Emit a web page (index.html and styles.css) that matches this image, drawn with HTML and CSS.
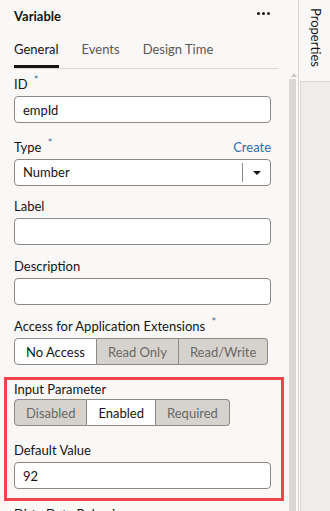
FILE: index.html
```html
<!DOCTYPE html>
<html lang="en">
<head>
    <meta charset="UTF-8">
    <meta name="viewport" content="width=device-width, initial-scale=1.0">
    <title>Variable - Properties</title>
    <link rel="stylesheet" href="styles.css">
</head>
<body>
    <div class="app">
        <!-- Properties panel -->
        <div class="panel">
            <div class="panel-head">
                <h1>Variable</h1>
                <span class="more"><i></i><i></i><i></i></span>
            </div>

            <div class="tabs">
                <span class="tab active">General</span>
                <span class="tab">Events</span>
                <span class="tab">Design Time</span>
            </div>

            <div class="form">
                <div class="field">
                    <label>ID <span class="req">*</span></label>
                    <input type="text" value="empId">
                </div>

                <div class="field type-field">
                    <div class="field-head">
                        <label>Type <span class="req">*</span></label>
                        <a href="#" class="link">Create</a>
                    </div>
                    <div class="select">
                        <span class="select-value">Number</span>
                        <span class="select-btn"><span class="caret"></span></span>
                    </div>
                </div>

                <div class="field">
                    <label>Label</label>
                    <input type="text">
                </div>

                <div class="field">
                    <label>Description</label>
                    <input type="text">
                </div>

                <div class="field">
                    <label>Access for Application Extensions <span class="req">*</span></label>
                    <div class="btn-group">
                        <button class="on">No Access</button>
                        <button>Read Only</button>
                        <button>Read/Write</button>
                    </div>
                </div>

                <!-- highlighted section -->
                <div class="highlight">
                    <div class="field first">
                        <label>Input Parameter</label>
                        <div class="btn-group">
                            <button>Disabled</button>
                            <button class="on">Enabled</button>
                            <button>Required</button>
                        </div>
                    </div>
                    <div class="field last">
                        <label>Default Value</label>
                        <input type="text" value="92">
                    </div>
                </div>

                <div class="field">
                    <label>Dirty Data Behavior</label>
                </div>
            </div>
        </div>

        <!-- Scrollbar -->
        <div class="scrollbar">
            <span class="scroll-arrow"></span>
            <div class="scroll-track"></div>
        </div>

        <!-- Right rail -->
        <div class="rail">
            <div class="rail-tab">Properties</div>
            <div class="rail-box"></div>
        </div>
    </div>
</body>
</html>
```

FILE: styles.css
```css
* {
    margin: 0;
    padding: 0;
    box-sizing: border-box;
    font-family: Lato, "Noto Sans", sans-serif;
}

body {
    background: #f9f8f6;
    color: #161513;
    font-size: 13px;
    overflow: hidden;
}

.app {
    display: flex;
    height: 511px;
}

/* Panel */
.panel {
    width: 289px;
    padding: 0 18px 0 14px;
    overflow: hidden;
}

.panel-head {
    display: flex;
    justify-content: space-between;
    align-items: center;
    height: 30px;
    padding-top: 1px;
}

.panel-head h1 {
    font-size: 13px;
    font-weight: 700;
}

.more {
    display: flex;
    gap: 2px;
    margin-right: 1px;
    padding-bottom: 4px;
}

.more i {
    width: 3px;
    height: 3px;
    border-radius: 50%;
    background: #161513;
}

/* Tabs */
.tabs {
    display: flex;
    gap: 23px;
    height: 39px;
    margin-right: -7px;
    padding-top: 9px;
    border-bottom: 1px solid #dcdad7;
}

.tab {
    color: #5b5854;
    line-height: 20px;
}

.tab.active {
    color: #161513;
    height: 29px;
    border-bottom: 3px solid #161513;
}

/* Form */
.form {
    padding-top: 6px;
}

.field {
    margin-bottom: 12px;
}

.field label {
    display: block;
    line-height: 18px;
    margin-bottom: 3px;
}

.req {
    position: relative;
    top: -5px;
    color: #4c6f95;
    font-size: 11px;
    line-height: 1;
    margin-left: 3px;
}

.type-field {
    margin-bottom: 11px;
}

.field-head {
    display: flex;
    justify-content: space-between;
    align-items: flex-end;
    padding-top: 3px;
}

.link {
    color: #2f6fad;
    text-decoration: none;
    line-height: 18px;
    margin-bottom: 3px;
}

input {
    display: block;
    width: 100%;
    height: 27px;
    padding: 0 8px;
    border: 1px solid #8d8a86;
    border-radius: 4px;
    background: #fff;
    color: #161513;
    font-size: 13px;
    outline: none;
}

.select {
    display: flex;
    height: 27px;
    border: 1px solid #8d8a86;
    border-radius: 4px;
    background: #fff;
}

.select-value {
    flex: 1;
    padding-left: 8px;
    line-height: 25px;
}

.select-btn {
    width: 28px;
    display: flex;
    align-items: center;
    justify-content: center;
    margin: 3px 0;
    border-left: 1px solid #8d8a86;
}

.caret {
    width: 0;
    height: 0;
    border-left: 4px solid transparent;
    border-right: 4px solid transparent;
    border-top: 4px solid #161513;
}

/* Button groups */
.btn-group {
    display: flex;
}

.btn-group button {
    flex-shrink: 0;
    height: 27px;
    padding: 0 11px;
    border: 1px solid #8d8a86;
    border-left: none;
    background: #d6d3cf;
    color: #6b6864;
    font-size: 13px;
    white-space: nowrap;
}

.btn-group button:first-child {
    border-left: 1px solid #8d8a86;
    border-radius: 4px 0 0 4px;
}

.btn-group button:last-child {
    border-radius: 0 4px 4px 0;
}

.btn-group button.on {
    background: #fff;
    color: #161513;
}

/* Highlight box */
.highlight {
    margin: 10px -13px 4px -10px;
    padding: 0 10px 9px 7px;
    border: 3px solid #f2444a;
}

.field.first label {
    margin-bottom: 1px;
}

.field.last {
    margin-top: 15px;
    margin-bottom: 0;
}

/* Scrollbar */
.scrollbar {
    width: 9px;
    display: flex;
    flex-direction: column;
    align-items: flex-start;
    border-right: 2px solid #fbfaf9;
}

.scroll-arrow {
    margin: 73px 0 2px 2px;
    border-left: 3px solid transparent;
    border-right: 3px solid transparent;
    border-bottom: 4px solid #c8c6c3;
}

.scroll-track {
    flex: 1;
    width: 7px;
    background: #dad8d5;
}

/* Right rail */
.rail {
    flex: 1;
    display: flex;
    flex-direction: column;
    border-left: 1px solid #d7d5d2;
}

.rail-tab {
    writing-mode: vertical-rl;
    align-self: flex-start;
    height: 81px;
    margin-left: 9px;
    padding-top: 8px;
    color: #161513;
    font-size: 13px;
}

.rail-box {
    flex: 1;
    margin-left: 1px;
    background: #eeedeb;
    border-top: 1px solid #dddbd8;
    border-left: 1px solid #dddbd8;
}
```
